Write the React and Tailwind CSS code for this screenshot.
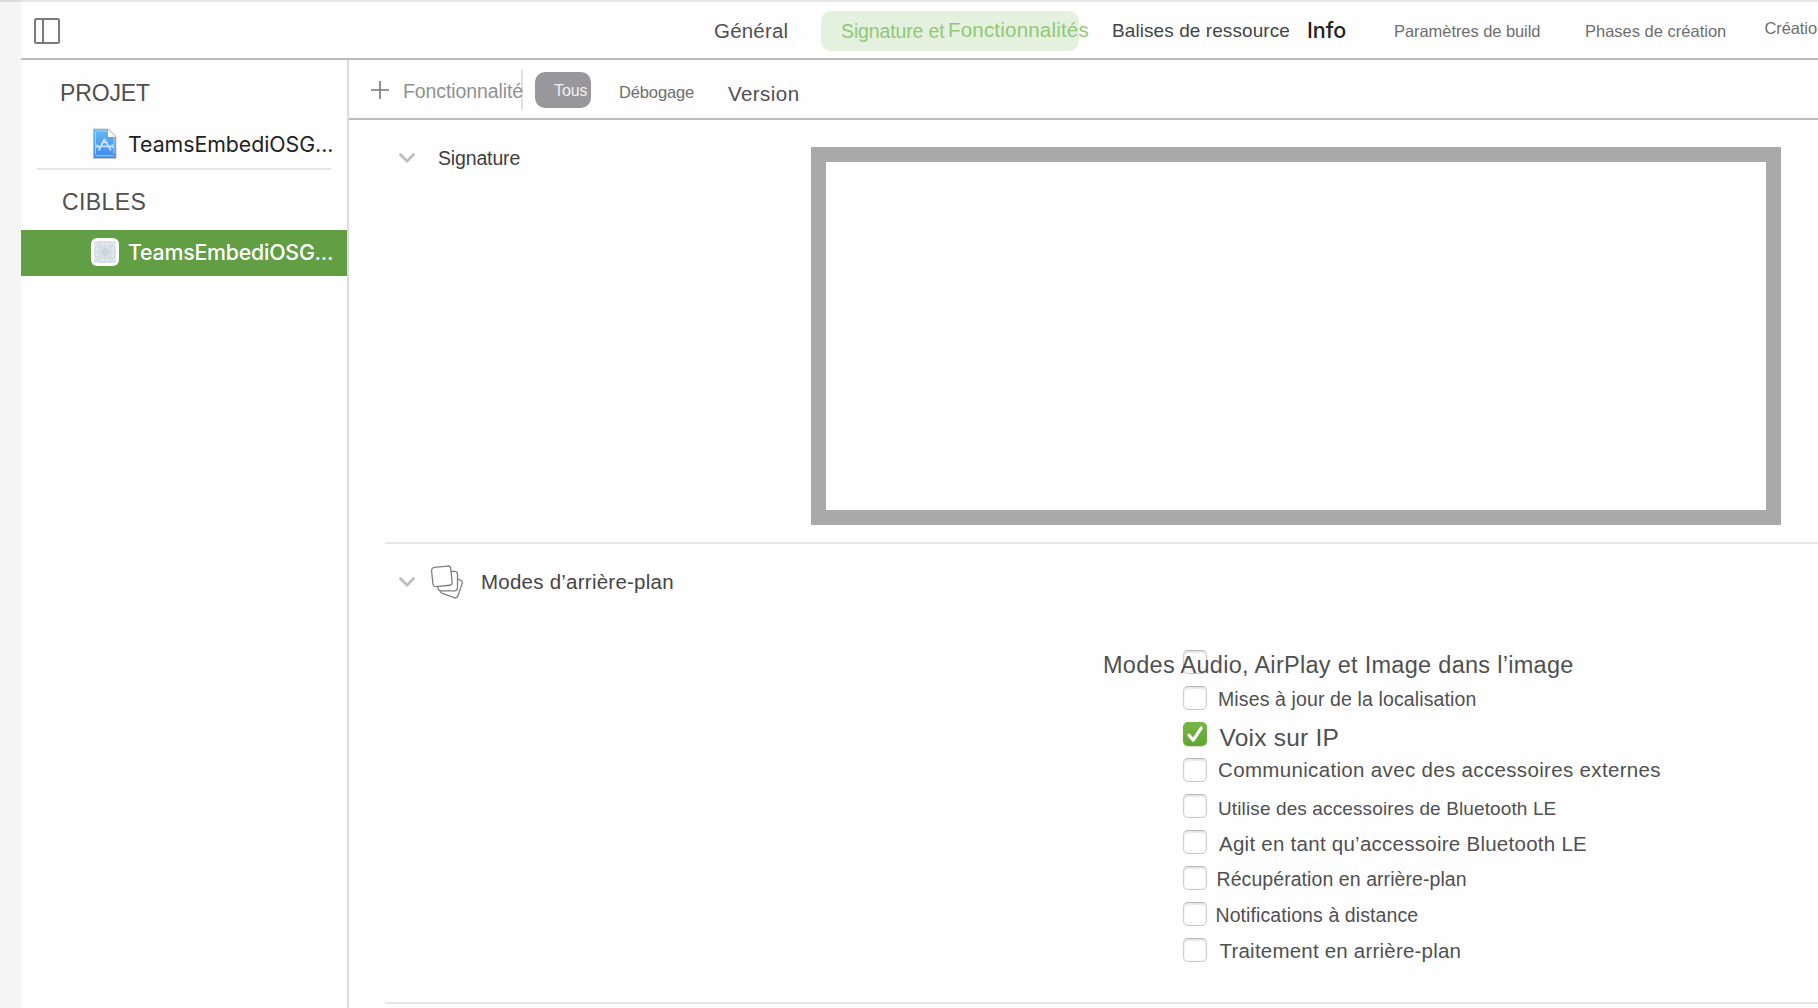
const box = "h-6 shrink-0 whitespace-nowrap leading-6 ";

function T({ className = "", children }) {
  return <span className={box + className}>{children}</span>;
}

function PanelIcon() {
  return (
    <svg className="ml-[13px] mt-4 size-[26px] shrink-0" viewBox="0 0 26 26" fill="none" stroke="#7b7b7b" strokeWidth="2">
      <rect x="1" y="1" width="24" height="24" rx="1.5" />
      <path d="M9 1v24" />
    </svg>
  );
}

function Chevron({ className }) {
  return (
    <svg className={className} width="16" height="10" viewBox="0 0 16 10" fill="none" stroke="#bdbdbd" strokeWidth="2.6" strokeLinecap="round">
      <path d="M1.4 1.5 8 8.2l6.6-6.7" />
    </svg>
  );
}

function ProjectIcon() {
  return (
    <svg className="ml-[71px] size-8 shrink-0" viewBox="0 0 32 32" fill="none">
      <defs>
        <linearGradient id="doc" x1="0" y1="0" x2="0" y2="1">
          <stop offset="0" stopColor="#63b9ee" />
          <stop offset="1" stopColor="#3f87f1" />
        </linearGradient>
      </defs>
      <path d="M1 .5h15.5l8 8V31H1z" fill="#c9c4bd" />
      <path d="M1.8 1.3h14.4l7.5 7.5v21.1H1.8z" fill="url(#doc)" />
      <path d="M3.5 3h12M3.5 3v23M22 9.5V26M3.5 27.7H22" stroke="#9fd2f7" strokeWidth="1" />
      <path d="M16 1.2l7.8 7.7H16z" fill="#f7f7f5" />
      <path d="M12.6 11 6.8 22.500M12.400 11 19 22.500M5 18.300h16M5.200 16.500v3.500M20.500 16.500v3.500M9.500 14.500l6 0" stroke="#c5e4fc" strokeWidth="1.7" />
    </svg>
  );
}

function TargetIcon() {
  return (
    <svg className="-mt-[2px] ml-[70px] size-7 shrink-0" viewBox="0 0 28 28" fill="none">
      <rect width="28" height="28" rx="6" fill="#fff" />
      <rect x="3" y="3" width="22" height="22" rx="1.5" fill="#e2e8ec" />
      <g stroke="#cbd5dc" strokeWidth=".7">
        <path d="M3 3l22 22M25 3 3 25M14 3v22M3 14h22M9 3v22M19 3v22M3 9h22M3 19h22" />
        <circle cx="14" cy="14" r="10.5" />
        <circle cx="14" cy="14" r="6.5" />
      </g>
      <circle cx="14" cy="14" r="4" fill="#c9d5dc" />
    </svg>
  );
}

function StackIcon() {
  return (
    <svg className="ml-4 mt-[21px] size-[34px] shrink-0" viewBox="0 0 34 34" fill="#fff" stroke="#7f7f7f" strokeWidth="1.3">
      <rect x="11" y="12.5" width="18.5" height="18.5" rx="3" transform="rotate(19 20.25 21.75)" />
      <rect x="7" y="6.3" width="19.5" height="19.5" rx="3" />
      <rect x="1.2" y="1.7" width="19.3" height="19.3" rx="3" transform="rotate(-6 10.8 11.3)" />
    </svg>
  );
}

function Checkbox({ checked }) {
  if (checked) {
    return (
      <svg className="size-6 shrink-0 rounded-[5px] bg-linear-to-b from-[#7ab648] to-[#5fa62f] shadow-[0_1px_1px_#d5e3ca]" viewBox="0 0 24 24" fill="none" stroke="#fff" strokeWidth="3.2" strokeLinecap="round" strokeLinejoin="round">
        <path d="M6 13.2l4.3 4.9L18.2 6" />
      </svg>
    );
  }
  return <span className="size-6 shrink-0 rounded-[5px] border border-t-[#b5b5b5] border-x-[#cecece] border-b-[#c9c9c9] bg-white shadow-[inset_0_2px_2px_#e6e6e6,inset_0_0_1px_#d0d0d0]" />;
}

const modes = [
  { label: "Modes Audio, AirPlay et Image dans l’image", cls: "relative -ml-[104px] mt-[3px] text-[23.5px] tracking-[0.29px]" },
  { label: "Mises à jour de la localisation", cls: "ml-[11px] mt-px text-[19.5px] tracking-[0.12px]" },
  { label: "Voix sur IP", cls: "ml-[12.5px] mt-1 text-[24.5px] tracking-[0.22px]", on: true },
  { label: "Communication avec des accessoires externes", cls: "ml-[11px] text-[20.5px] tracking-[0.337px]" },
  { label: "Utilise des accessoires de Bluetooth LE", cls: "ml-[11px] mt-[3px] text-[19px] tracking-[0.12px]" },
  { label: "Agit en tant qu’accessoire Bluetooth LE", cls: "ml-3 mt-[2px] text-[20.5px] tracking-[0.26px]" },
  { label: "Récupération en arrière-plan", cls: "ml-[9.5px] mt-px text-[19.5px] tracking-[0.07px]" },
  { label: "Notifications à distance", cls: "ml-[8.5px] mt-px text-[19.5px] tracking-[0.09px]" },
  { label: "Traitement en arrière-plan", cls: "ml-[12.5px] mt-px text-[20.5px] tracking-[0.21px]" },
];

function Header() {
  return (
    <header className="flex h-[60px] shrink-0 items-start overflow-hidden border-t-2 border-b-2 border-t-[#e5e5e5] border-b-[#bbbbbb]">
      <PanelIcon />
      <T className="ml-[654px] mt-[17px] w-[107px] text-[20.5px] tracking-[0.2px]">Général</T>
      <div className="mt-[9px] flex h-10 w-[258px] shrink-0 rounded-[10px] bg-[#e4f1de] pl-5 text-[#92c77a]">
        <T className="mt-2 w-[107px] text-[19.5px] tracking-[-0.13px]">Signature et</T>
        <T className="mt-[7px] text-[20.5px] tracking-[0.2px]">Fonctionnalités</T>
      </div>
      <T className="ml-[33px] mt-[17px] w-[195px] text-[19px] text-[#454545] tracking-[0.079px]">Balises de ressource</T>
      <T className="mt-[16px] w-[87px] font-['Inter',sans-serif] text-[21.5px] font-medium tracking-[-0.05px] text-[#222]">Info</T>
      <T className="mt-[17px] w-[191px] text-[16.5px] tracking-[-0.066px] text-[#6e6e6e]">Paramètres de build</T>
      <T className="mt-[17px] w-[179.5px] text-[16.5px] text-[#6e6e6e]">Phases de création</T>
      <T className="mt-[14px] text-[16.5px] tracking-[-0.1px] text-[#6e6e6e]">Créatio</T>
    </header>
  );
}

function Sidebar() {
  return (
    <aside className="flex w-[328px] shrink-0 flex-col border-r-2 border-[#dddddd]">
      <T className="ml-[39px] mt-[21px] text-[23px] tracking-[-0.15px]">PROJET</T>
      <div className="mt-[23px] flex h-8">
        <ProjectIcon />
        <T className="ml-1 mt-1 font-['Inter',sans-serif] text-[21.3px] tracking-[-0.03px] text-[#222]">TeamsEmbediOSG...</T>
      </div>
      <div className="mx-4 mt-2 h-0.5 shrink-0 bg-[#e5e5e5]" />
      <T className="ml-[41px] mt-5 text-[23px] tracking-[0.4px]">CIBLES</T>
      <div className="mt-4 flex h-[46px] shrink-0 items-center bg-[#629e43]">
        <TargetIcon />
        <T className="ml-[9px] -mt-[2px] font-['Inter',sans-serif] text-[21.3px] font-medium tracking-[-0.2px] text-white">TeamsEmbediOSG...</T>
      </div>
    </aside>
  );
}

function Toolbar() {
  return (
    <div className="flex h-[60px] shrink-0 items-start border-b-2 border-[#bbbbbb]">
      <svg className="ml-[22px] mt-[21px] size-[18px] shrink-0" viewBox="0 0 18 18" stroke="#777" strokeWidth="1.6">
        <path d="M9 0v18M0 9h18" />
      </svg>
      <T className="relative ml-[14px] mt-[19px] w-[118px] text-[19.5px] tracking-[-0.1px] text-[#919191]">Fonctionnalité</T>
      <div className="mt-[10px] h-10 w-0.5 shrink-0 bg-[#e0e0e0]" />
      <div className="ml-3 mt-3 flex h-9 w-14 shrink-0 rounded-[10px] bg-[#98979b] pl-[19px] text-[#f0f0f0]">
        <T className="mt-[7px] text-[16px] tracking-[-0.1px]">Tous</T>
      </div>
      <T className="ml-7 mt-5 w-[109px] text-[16.5px] tracking-[-0.139px] text-[#6e6e6e]">Débogage</T>
      <T className="mt-[22px] text-[20.5px] tracking-[0.45px]">Version</T>
    </div>
  );
}

export default function App() {
  return (
    <div className="flex h-[1008px] w-[1818px] overflow-hidden bg-[#fefefe] font-['Liberation_Sans',Arial,sans-serif] text-[#505050]">
      <div className="w-[21px] shrink-0 border-t-2 border-[#dcdcdc] bg-[#f5f5f5]" />
      <div className="flex w-[1797px] shrink-0 flex-col">
        <Header />
        <div className="flex grow">
          <Sidebar />
          <main className="flex grow flex-col">
            <Toolbar />
            <section className="ml-9 flex h-[424px] shrink-0 items-start border-b-2 border-[#e5e5e5]">
              <Chevron className="ml-[14px] mt-[33px] shrink-0" />
              <T className="ml-[23px] mt-[26px] w-[373px] text-[19.5px] tracking-[-0.15px] text-[#404040]">Signature</T>
              <div className="mt-[27px] h-[378px] w-[970px] shrink-0 border-[15px] border-[#a9a9a9] bg-white" />
            </section>
            <section className="ml-9 flex h-[460px] shrink-0 flex-col border-b-2 border-[#e5e5e5]">
              <div className="flex h-[106px] shrink-0 items-start">
                <Chevron className="ml-[14px] mt-[33px] shrink-0" />
                <StackIcon />
                <T className="ml-4 mt-[26px] text-[20.5px] tracking-[0.24px] text-[#454545]">Modes d’arrière-plan</T>
              </div>
              <ul className="ml-[798px] flex flex-col gap-3">
                {modes.map((m) => (
                  <li key={m.label} className="flex h-6 items-start">
                    <Checkbox checked={m.on} />
                    <T className={m.cls}>{m.label}</T>
                  </li>
                ))}
              </ul>
            </section>
          </main>
        </div>
      </div>
    </div>
  );
}
